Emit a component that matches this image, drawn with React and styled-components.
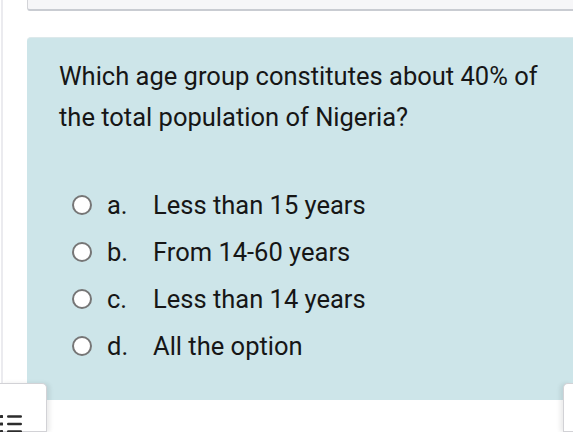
import React from 'react';
import styled, { createGlobalStyle } from 'styled-components';

const GlobalStyle = createGlobalStyle`
  html, body {
    margin: 0;
    padding: 0;
    background: #ffffff;
    overflow: hidden;
  }
  body {
    font-family: Roboto, 'Noto Sans', Arial, sans-serif;
  }
`;

const options = [
  { key: 'a.', text: 'Less than 15 years' },
  { key: 'b.', text: 'From 14-60 years' },
  { key: 'c.', text: 'Less than 14 years' },
  { key: 'd.', text: 'All the option' },
];

const Page = styled.div`
  position: relative;
  width: 573px;
  height: 432px;
  overflow: hidden;
  display: flex;
`;

const Rail = styled.div`
  width: 25px;
  flex-shrink: 0;
  box-sizing: border-box;
  border-left: 2px solid #ebebef;
  margin-left: 1px;
  height: 383px;
`;

const Main = styled.div`
  flex: 1;
  display: flex;
  flex-direction: column;
  min-width: 0;
`;

const TopCard = styled.div`
  height: 11px;
  margin-left: 1px;
  margin-right: -10px;
  background: #f6f6f8;
  border: 1px solid #d3d4d8;
  border-top: none;
  border-bottom: 2px solid #c9ccd2;
  border-bottom-left-radius: 3px;
  box-sizing: border-box;
`;

const QuestionCard = styled.div`
  margin-top: 26px;
  margin-left: 1px;
  margin-right: -10px;
  height: 363px;
  background: #cde5e9;
  border-top: 1px solid #dde9eb;
  border-top-left-radius: 4px;
  box-sizing: border-box;
  padding: 18px 0 0 32px;
`;

const Question = styled.p`
  margin: 0;
  font-size: 25.5px;
  line-height: 41px;
  color: #161616;
  width: 500px;
`;

const OptionList = styled.div`
  display: flex;
  flex-direction: column;
  gap: 13px;
  margin-top: 50px;
  padding-left: 13px;
`;

const OptionRow = styled.label`
  display: flex;
  align-items: center;
  height: 34px;
  font-size: 25.5px;
  color: #161616;
`;

const Radio = styled.span`
  width: 20px;
  height: 20px;
  box-sizing: border-box;
  border-radius: 50%;
  border: 2px solid #767676;
  background: #ffffff;
  flex-shrink: 0;
`;

const Letter = styled.span`
  width: 46px;
  margin-left: 15px;
`;

const Footer = styled.div`
  position: absolute;
  left: 0;
  right: 0;
  top: 383px;
  bottom: 0;
  display: flex;
  justify-content: space-between;
  pointer-events: none;
`;

const SideCard = styled.div`
  width: ${(p) => p.$w}px;
  background: #ffffff;
  border: 1px solid #d2d2d6;
  box-sizing: border-box;
  border-top-left-radius: ${(p) => (p.$side === 'right' ? 5 : 0)}px;
  border-top-right-radius: ${(p) => (p.$side === 'left' ? 5 : 0)}px;
  box-shadow: ${(p) => (p.$side === 'left' ? '3px 0 4px rgba(0,0,0,0.08)' : '-3px 0 4px rgba(0,0,0,0.08)')};
  ${(p) => (p.$side === 'left' ? 'border-left: none;' : 'border-right: none;')}
  padding-top: 30px;
`;

const ListIcon = () => (
  <svg width="24" height="20" viewBox="0 0 24 20" style={{ display: 'block' }}>
    <g fill="#2c2c2c">
      <rect x="0" y="1" width="3" height="3" rx="0.5" />
      <rect x="7" y="1.3" width="15" height="2.4" rx="1.2" />
      <rect x="0" y="8.5" width="3" height="3" rx="0.5" />
      <rect x="7" y="8.8" width="15" height="2.4" rx="1.2" />
      <rect x="0" y="16" width="3" height="3" rx="0.5" />
      <rect x="7" y="16.3" width="15" height="2.4" rx="1.2" />
    </g>
  </svg>
);

export default function App() {
  return (
    <>
      <GlobalStyle />
      <Page>
        <Rail />
        <Main>
          <TopCard />
          <QuestionCard>
            <Question>
              Which age group constitutes about 40% of the total population of Nigeria?
            </Question>
            <OptionList>
              {options.map((o) => (
                <OptionRow key={o.key}>
                  <Radio />
                  <Letter>{o.key}</Letter>
                  <span>{o.text}</span>
                </OptionRow>
              ))}
            </OptionList>
          </QuestionCard>
        </Main>
        <Footer>
          <SideCard $w={47} $side="left">
            <ListIcon />
          </SideCard>
          <SideCard $w={10} $side="right" />
        </Footer>
      </Page>
    </>
  );
}
